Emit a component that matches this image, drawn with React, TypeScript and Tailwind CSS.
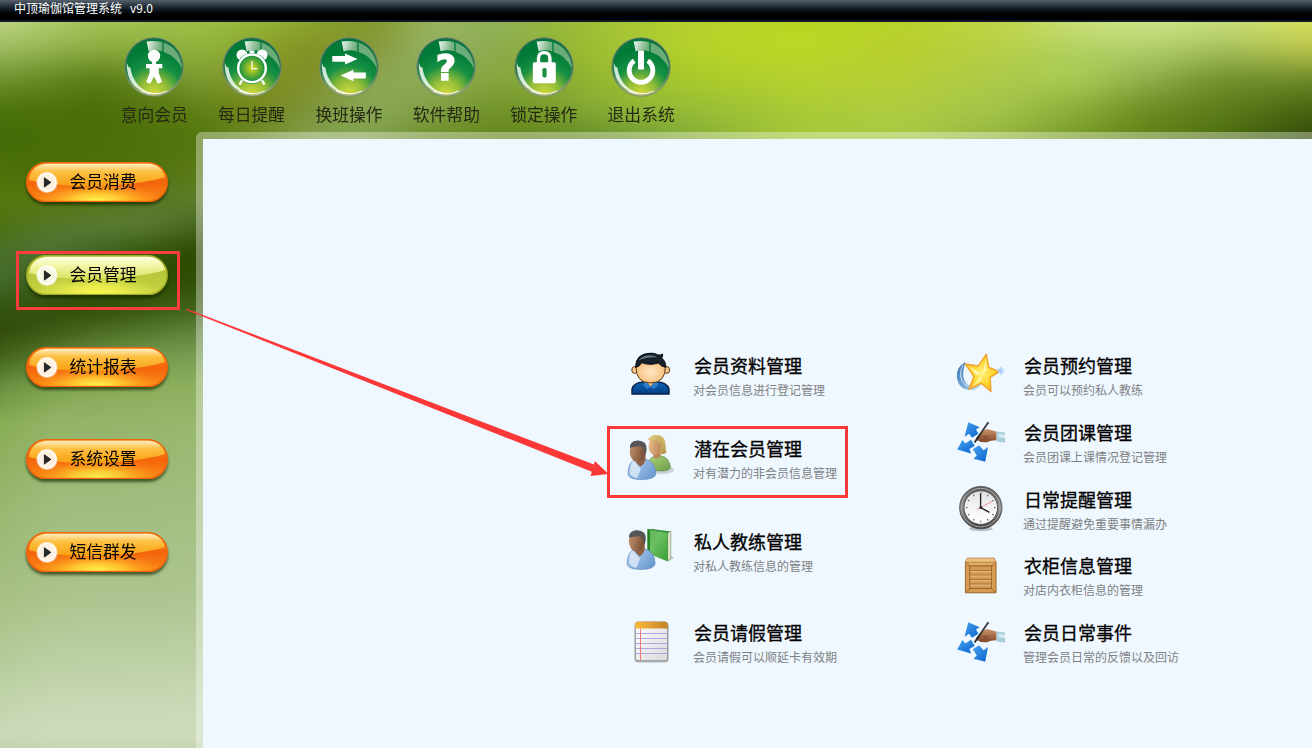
import type { ReactNode } from 'react'

type MeshRow = { y: number; colors: string[] }

// Header: one colour every 100px or so across the full width
const headerX = [0, 100, 200, 260, 310, 370, 430, 500, 560, 630, 700, 800, 900, 1000, 1080, 1150, 1220, 1312]
const headerRows: MeshRow[] = [
  { y: 22, colors: ['#bfd585', '#a3c458', '#9cc046', '#96b63a', '#8ba530', '#829629', '#98b35a', '#90b35a', '#98b83c', '#a9c636', '#b7d12f', '#bad621', '#b8d22c', '#bfd448', '#cce07c', '#cfe48a', '#cbe080', '#d6e05a'] },
  { y: 50, colors: ['#9cbb60', '#88aa3c', '#8fb33c', '#8aa02a', '#838f22', '#86983a', '#94b066', '#8baa4c', '#93b432', '#a8c732', '#b6d32a', '#bbd726', '#b9ce2e', '#b6cf48', '#b0d060', '#b0cd68', '#a2bd5a', '#b9c24a'] },
  { y: 80, colors: ['#6f9330', '#587a14', '#7c9c32', '#838f22', '#7f9028', '#8ca652', '#8dac54', '#86a63c', '#8bac34', '#9cbf2c', '#aaca2a', '#b5d130', '#b5cf36', '#adc94a', '#a8ca54', '#8fad4a', '#70902e', '#6c8928'] },
  { y: 110, colors: ['#4b720c', '#4c6d08', '#5f8015', '#75881d', '#7d943a', '#8aa958', '#83a046', '#6f9228', '#7ca030', '#8fb53a', '#98bd38', '#aacb36', '#afcc40', '#a3c34b', '#8caa38', '#6d8a20', '#5c7d1a', '#46630f'] },
  { y: 139, colors: ['#446c09', '#4b6e0a', '#50750c', '#698928', '#84a150', '#809e4a', '#6c8c28', '#64841a', '#5f851f', '#6c9530', '#86ae36', '#a5c637', '#a8c745', '#93b23e', '#729824', '#5e8116', '#4e6e12', '#304709'] },
]

const sideX = [0, 50, 100, 150, 203]
const sideRows: MeshRow[] = [
  { y: 139, colors: ['#446c09', '#486c09', '#4b6e0a', '#4f720b', '#55770f'] },
  { y: 170, colors: ['#4d7209', '#4b6e0a', '#4d7009', '#50720c', '#5c7b18'] },
  { y: 200, colors: ['#55780f', '#57780e', '#52740f', '#587826', '#5f7f2c'] },
  { y: 225, colors: ['#4d720f', '#54772a', '#5c7d37', '#5d7c38', '#44641c'] },
  { y: 250, colors: ['#4a7028', '#517438', '#426521', '#34560a', '#2c4900'] },
  { y: 280, colors: ['#466c2c', '#3b5e18', '#2d4b04', '#2d4a00', '#2f4e04'] },
  { y: 310, colors: ['#345412', '#2f4e08', '#30500a', '#3a5a14', '#45671c'] },
  { y: 330, colors: ['#31490b', '#3c5814', '#4a6b20', '#55772c', '#628440'] },
  { y: 355, colors: ['#3e5f14', '#587b30', '#6b8f42', '#74984c', '#7a9e54'] },
  { y: 385, colors: ['#668b3c', '#7da14e', '#86a956', '#8aad5a', '#8db05f'] },
  { y: 420, colors: ['#86aa52', '#93b465', '#94b468', '#96b56a', '#98b76d'] },
  { y: 500, colors: ['#96b66c', '#9fbc7c', '#a0bd7d', '#a0bd7e', '#a1be80'] },
  { y: 600, colors: ['#a6c083', '#acc48d', '#adc590', '#adc590', '#aec692'] },
  { y: 680, colors: ['#b9cea0', '#c2d3ab', '#c2d3ac', '#c3d4ad', '#c3d4ae'] },
  { y: 732, colors: ['#cbd9b8', '#cfddbd', '#cfddbd', '#cfddbd', '#cfddbd'] },
  { y: 748, colors: ['#c3d2ab', '#c6d4b0', '#c6d4b0', '#c6d4b0', '#c6d4b0'] },
]

// Every band fades from the colours of its upper row to those of the lower one
function Mesh({ id, xs, rows }: { id: string; xs: number[]; rows: MeshRow[] }) {
  const width = xs[xs.length - 1]
  return (
    <g id={id}>
      <defs>
        <linearGradient id={`${id}-fade`} x1="0" y1="0" x2="0" y2="1">
          <stop offset="0" stopColor="#fff" />
          <stop offset="1" stopColor="#fff" stopOpacity="0" />
        </linearGradient>
        {rows.map((row, i) => (
          <linearGradient key={i} id={`${id}-${i}`} gradientUnits="userSpaceOnUse" x1="0" y1="0" x2={width} y2="0">
            {row.colors.map((c, j) => (
              <stop key={j} offset={xs[j] / width} stopColor={c} />
            ))}
          </linearGradient>
        ))}
      </defs>
      {rows.slice(0, -1).map((row, i) => {
        const h = rows[i + 1].y - row.y
        return (
          <g key={i}>
            <mask id={`${id}-m${i}`} maskUnits="userSpaceOnUse" x="0" y={row.y} width={width} height={h} style={{ maskType: 'alpha' }}>
              <rect x="0" y={row.y} width={width} height={h} fill={`url(#${id}-fade)`} />
            </mask>
            <rect x="0" y={row.y} width={width} height={h} fill={`url(#${id}-${i + 1})`} />
            <rect x="0" y={row.y} width={width} height={h} fill={`url(#${id}-${i})`} mask={`url(#${id}-m${i})`} />
          </g>
        )
      })}
    </g>
  )
}

function Backdrop() {
  return (
    <svg className="absolute inset-0" width="1312" height="748" viewBox="0 0 1312 748">
      <filter id="soften" filterUnits="userSpaceOnUse" x="0" y="0" width="1312" height="748" colorInterpolationFilters="sRGB">
        <feGaussianBlur stdDeviation="14 8" />
      </filter>
      <Mesh id="head" xs={headerX} rows={headerRows} />
      <Mesh id="side" xs={sideX} rows={sideRows} />
      {/* a softened copy on top hides the band edges */}
      <g filter="url(#soften)">
        <use href="#head" />
        <use href="#side" />
      </g>
    </svg>
  )
}

/* Shared gradients for all icons */
function IconDefs() {
  return (
    <svg className="absolute" width="0" height="0">
      <defs>
        <radialGradient id="orb" cx="0.5" cy="1" r="0.8">
          <stop offset="0" stopColor="#d5dc3c" />
          <stop offset="0.35" stopColor="#8fbb38" />
          <stop offset="0.66" stopColor="#169044" />
          <stop offset="1" stopColor="#007a36" />
        </radialGradient>
        <linearGradient id="rim" x1="0" y1="0" x2="0" y2="1">
          <stop offset="0" stopColor="#1d6848" />
          <stop offset="0.6" stopColor="#3d7b4c" />
          <stop offset="1" stopColor="#b6b87e" />
        </linearGradient>
        <linearGradient id="shine" x1="0" y1="0" x2="1" y2="0.2">
          <stop offset="0" stopColor="#fff" stopOpacity="0.95" />
          <stop offset="1" stopColor="#c8d8b8" stopOpacity="0.55" />
        </linearGradient>
        <radialGradient id="dial">
          <stop offset="0" stopColor="#d8d820" />
          <stop offset="1" stopColor="#0b8b40" />
        </radialGradient>
        <radialGradient id="skin" cx="0.5" cy="0.55" r="0.6">
          <stop offset="0" stopColor="#ffe9c8" />
          <stop offset="1" stopColor="#f4b66c" />
        </radialGradient>
        <linearGradient id="navy" x1="0" y1="0" x2="0" y2="1">
          <stop offset="0" stopColor="#0b63b4" />
          <stop offset="1" stopColor="#053e86" />
        </linearGradient>
        <linearGradient id="brown" x1="0" y1="0" x2="1" y2="0.3">
          <stop offset="0" stopColor="#c4936e" />
          <stop offset="0.5" stopColor="#a17453" />
          <stop offset="1" stopColor="#7a5239" />
        </linearGradient>
        <linearGradient id="hand" x1="0" y1="0" x2="0" y2="1">
          <stop offset="0" stopColor="#c99068" />
          <stop offset="1" stopColor="#84492a" />
        </linearGradient>
        <linearGradient id="pale" x1="0" y1="0" x2="1" y2="0.2">
          <stop offset="0" stopColor="#ecc091" />
          <stop offset="1" stopColor="#c08a5e" />
        </linearGradient>
        <linearGradient id="shirt" x1="0" y1="0" x2="1" y2="0.6">
          <stop offset="0" stopColor="#b9d6f4" />
          <stop offset="1" stopColor="#6c9bd2" />
        </linearGradient>
        <linearGradient id="olive" x1="0" y1="0" x2="1" y2="1">
          <stop offset="0" stopColor="#b3d37c" />
          <stop offset="1" stopColor="#6a9e48" />
        </linearGradient>
        <linearGradient id="blond" x1="0" y1="0" x2="1" y2="1">
          <stop offset="0" stopColor="#e8d48a" />
          <stop offset="1" stopColor="#b39449" />
        </linearGradient>
        <linearGradient id="book" x1="0" y1="0" x2="1" y2="1">
          <stop offset="0" stopColor="#5fb456" />
          <stop offset="0.4" stopColor="#6cbf62" />
          <stop offset="1" stopColor="#37a034" />
        </linearGradient>
        <linearGradient id="amber" x1="0" y1="0" x2="1" y2="0">
          <stop offset="0" stopColor="#fcb93a" />
          <stop offset="1" stopColor="#c48429" />
        </linearGradient>
        <linearGradient id="paper" x1="0" y1="0" x2="1" y2="1">
          <stop offset="0" stopColor="#fff" />
          <stop offset="1" stopColor="#d9d9db" />
        </linearGradient>
        <radialGradient id="star" cx="0.5" cy="0.5" r="0.55">
          <stop offset="0" stopColor="#fff27a" />
          <stop offset="0.6" stopColor="#ffd42c" />
          <stop offset="1" stopColor="#fbae24" />
        </radialGradient>
        <linearGradient id="moon" x1="0" y1="0" x2="1" y2="1">
          <stop offset="0" stopColor="#3a6cab" />
          <stop offset="0.5" stopColor="#6ea4d6" />
          <stop offset="1" stopColor="#c9e2f7" />
        </linearGradient>
        <linearGradient id="arrowBlue" x1="0" y1="0" x2="1" y2="1">
          <stop offset="0" stopColor="#45a3f0" />
          <stop offset="1" stopColor="#0a62cd" />
        </linearGradient>
        <linearGradient id="steel" x1="0" y1="0" x2="0" y2="1">
          <stop offset="0" stopColor="#555" />
          <stop offset="0.5" stopColor="#8b8b8b" />
          <stop offset="1" stopColor="#3a3a3a" />
        </linearGradient>
        <linearGradient id="face" x1="0" y1="0" x2="0" y2="1">
          <stop offset="0" stopColor="#dcdfe2" />
          <stop offset="0.5" stopColor="#f4f5f6" />
          <stop offset="1" stopColor="#fff" />
        </linearGradient>
      </defs>
    </svg>
  )
}

function Orb({ children }: { children: ReactNode }) {
  return (
    <svg width="60" height="60" viewBox="0 0 60 60">
      <circle cx="30" cy="30" r="29.3" fill="url(#rim)" stroke="#6f8c78" strokeWidth="0.8" />
      <circle cx="30" cy="29.8" r="27.6" fill="url(#orb)" />
      <path d="M22.7 4.6Q30 3.4 38.3 5.2V14.6Q32 12.3 24.6 14.2Z" fill="url(#shine)" />
      <path d="M39.6 5.6Q56.5 12 58 31.5Q52 19 39.6 15Z" fill="#c4d6b4" fillOpacity="0.55" />
      <path d="M2.8 26Q2.6 45 15 52.3Q24 58.5 36 56.5Q22 57 14 48Q7.5 40 6.4 30.5L4.6 30Z" fill="#fff" fillOpacity="0.8" />
      <path d="M17 54Q30 59.5 43 54" fill="none" stroke="#fff" strokeWidth="1.2" strokeOpacity="0.8" />
      {children}
    </svg>
  )
}

const tools = [
  {
    label: '意向会员',
    icon: (
      <g fill="#fff">
        <circle cx="30" cy="19" r="6.2" />
        <path d="M22 27H38.3V31.3H34.8V36L38 45L33.8 46.8L30 39.6L26.2 46.8L22.2 45L25.6 36V31.3H22Z" />
        <rect x="28" y="24" width="4" height="5" />
      </g>
    ),
  },
  {
    label: '每日提醒',
    icon: (
      <g>
        <circle cx="20" cy="18" r="5.5" fill="#fff" />
        <circle cx="40" cy="18" r="5.5" fill="#fff" />
        <rect x="27.6" y="13.5" width="4.8" height="5" fill="#fff" />
        <path d="M20.5 42.5L17.5 47.5M39.5 42.5L42.5 47.5" stroke="#fff" strokeWidth="2.4" />
        <circle cx="30" cy="31.3" r="15.4" fill="#087e3b" />
        <circle cx="30" cy="31.3" r="13.8" fill="url(#dial)" stroke="#fff" strokeWidth="2.4" />
        <path d="M30 24V31.6H35.4" fill="none" stroke="#fff" strokeWidth="1.2" />
      </g>
    ),
  },
  {
    label: '换班操作',
    icon: (
      <path
        fill="#fff"
        d="M13.3 19H26V16.4L38.6 22L26 27.6V24.8H13.3ZM46.8 35.6H34.4V32.8L21.6 38.5L34.4 44.2V41.4H46.8Z"
      />
    ),
  },
  {
    label: '软件帮助',
    icon: (
      <text
        x="30"
        y="43.2"
        textAnchor="middle"
        fill="#fff"
        stroke="#fff"
        strokeWidth="1.4"
        className="font-['DejaVu_Sans'] text-[35px] font-bold"
      >
        ?
      </text>
    ),
  },
  {
    label: '锁定操作',
    icon: (
      <g>
        <path d="M24.5 26V21.5Q24.5 15.6 30.2 15.6T35.9 21.5V26" fill="none" stroke="#fff" strokeWidth="3.4" />
        <rect x="18.8" y="25.2" width="23" height="21" rx="1.6" fill="#fff" />
        <rect x="28.4" y="31" width="4.2" height="9.4" rx="1.6" fill="#1b8d40" />
      </g>
    ),
  },
  {
    label: '退出系统',
    icon: (
      <g>
        <path d="M23.2 23.8A11.8 11.8 0 1 0 36.8 23.8" fill="none" stroke="#fff" strokeWidth="4.8" />
        <rect x="27" y="13.6" width="6" height="18.8" rx="0.6" fill="#fff" />
      </g>
    ),
  },
]

const menus = [
  { label: '会员消费', box: 'mb-[34px] border-transparent' },
  { label: '会员管理', box: 'mb-[33px] border-[#fb3c3c]', active: true },
  { label: '统计报表', box: 'mb-[33px] border-transparent' },
  { label: '系统设置', box: 'mb-[34px] border-transparent' },
  { label: '短信群发', box: 'border-transparent' },
]

function PillButton({ label, active }: { label: string; active?: boolean }) {
  const id = active ? 'pill-lime' : 'pill-orange'
  return (
    <button className="relative flex h-10 w-[142px] items-center rounded-full text-left shadow-[0_3px_3px_rgba(20,35,0,0.65)]">
      <svg className="absolute inset-0" width="142" height="40" viewBox="0 0 142 40">
        <defs>
          <linearGradient id={id} x1="0" y1="0" x2="0" y2="1">
            <stop offset="0" stopColor={active ? '#b5c634' : '#f9a01b'} />
            <stop offset="0.5" stopColor={active ? '#b7c83a' : '#f4640c'} />
            <stop offset="1" stopColor={active ? '#c9d440' : '#fb8a16'} />
          </linearGradient>
          <linearGradient id={`${id}-top`} x1="0" y1="0" x2="0" y2="1">
            <stop offset="0" stopColor={active ? '#fdfee6' : '#ffeec4'} />
            <stop offset="0.35" stopColor={active ? '#f5f7ac' : '#fdc043'} />
            <stop offset="1" stopColor={active ? '#d8e05c' : '#f8a010'} />
          </linearGradient>
          <radialGradient id={`${id}-glow`} cx="0.5" cy="0.5" r="0.5">
            <stop offset="0" stopColor={active ? '#fdfb4e' : '#fff750'} />
            <stop offset="0.4" stopColor={active ? '#eff050' : '#ffd034'} stopOpacity="0.85" />
            <stop offset="1" stopColor={active ? '#e0e650' : '#fc9a1c'} stopOpacity="0" />
          </radialGradient>
          <clipPath id={`${id}-clip`}>
            <rect x="1.6" y="1.6" width="138.8" height="37.2" rx="18.6" />
          </clipPath>
        </defs>
        <rect x="0.8" y="0.8" width="140.4" height="38.8" rx="19.4" fill={`url(#${id})`} stroke={active ? '#a0ae26' : '#f0640a'} strokeWidth="1.6" />
        <path d="M20 1.8H122Q136 2.5 139 15Q112 23 71 24Q28 24.5 3 18Q5 3.5 20 1.8Z" fill={`url(#${id}-top)`} />
        <g clipPath={`url(#${id}-clip)`}>
          <ellipse cx="71" cy="38.8" rx="66" ry="19" fill={`url(#${id}-glow)`} />
        </g>
        <circle cx="21" cy="20.4" r="10.6" fill="#fff" fillOpacity="0.55" />
        <circle cx="21" cy="20.4" r="9" fill={active ? '#f7f8e2' : '#fdf0e0'} stroke="#fff" strokeWidth="1.2" />
        <path d="M18.4 15.8L24.8 20.4L18.4 25Z" fill="#262626" stroke="#262626" strokeLinejoin="round" />
      </svg>
      <span className="relative -mt-0.5 pl-[43.5px] text-[16.8px] leading-[38px] text-black">{label}</span>
    </button>
  )
}

const memberIcon = (
  <g>
    <path d="M5 44V39Q7 32.5 16 32H31Q40 32.5 42 39V44Z" fill="url(#navy)" stroke="#041f42" strokeWidth="1.4" />
    <path d="M18 31L23.6 36.5L29.5 31L31.5 35L27 39L23.6 37L20 39L16 35Z" fill="#2b7cc9" />
    <path d="M18 30H29L23.6 36.5Z" fill="#f4b66c" />
    <ellipse cx="7.6" cy="20" rx="2.8" ry="3.4" fill="#f9c98a" stroke="#5f3b12" />
    <ellipse cx="39.8" cy="20" rx="2.8" ry="3.4" fill="#f9c98a" stroke="#5f3b12" />
    <path d="M9 16Q8.4 32.6 23.7 33Q39 32.6 38.4 16Q31 9 23.7 9T9 16Z" fill="url(#skin)" stroke="#5f3b12" />
    <path d="M8.6 17.4Q8.5 3.2 24 3.2Q28 3 31 5Q33.5 5.6 35.6 4Q36 6.2 34.6 8Q38.8 11 38.8 17.4Q34 16.4 31.4 13Q22 15.8 14.8 12.6Q12.6 16.6 8.6 17.4Z" fill="#14202a" stroke="#05090d" />
    <path d="M12 10Q15.5 5.4 23 5.2Q28 5.2 30 7.4Q20 6.8 12 10Z" fill="#65737e" />
  </g>
)

// Man in a blue shirt, shared by the prospect and coach icons
const man = (
  <g>
    <path d="M1 42Q1 31 6 27.6Q12 29 18.4 26Q28 28.4 29 40.6Q28 46.5 15 46.6Q3 46.5 1 42Z" fill="url(#shirt)" stroke="#5d89bf" strokeWidth="0.7" />
    <path d="M4 31Q5 28.4 6.6 27.6L14 36L10 45Q4 43.6 3 40Z" fill="#e3eefa" fillOpacity="0.75" />
    <path d="M8 22H18.6V26.6Q17 32 13.4 33.4Q9.4 31 8 27Z" fill="#8f6246" />
    <ellipse cx="10.6" cy="18.4" rx="7.9" ry="10.6" fill="url(#brown)" />
    <path d="M2.9 15Q2.4 7.6 11 7.4Q19.8 7.8 19.6 15.4Q19.6 19.4 18.2 22.4Q17.2 21 17.4 18Q16.6 14.4 14 13.4Q8 13 2.9 15Z" fill="#565656" />
  </g>
)

const prospectIcon = (
  <g>
    <ellipse cx="36" cy="37" rx="11" ry="4" fill="#777" fillOpacity="0.3" />
    <path d="M20 36Q20 25 28 23H34Q42 24 43.5 34Q43 38 34 38T20 36Z" fill="url(#olive)" stroke="#5c8b44" strokeWidth="0.6" />
    <path d="M25.4 17H33.6V23Q31 26.4 27 25Z" fill="#b98557" />
    {/* hair behind the face, then the fringe */}
    <path d="M22 5.4Q25 2 30 2Q38 2.6 38.4 11Q38.4 16 39.6 19.4Q35.6 22.4 31.6 20.6Z" fill="url(#blond)" />
    <ellipse cx="27.6" cy="13.4" rx="6" ry="8.6" fill="url(#pale)" />
    <path d="M20.6 7Q23 2 30 2Q35 3 35 9L34 16Q32.6 9.6 29.6 7.6Q25 8.6 20.6 7Z" fill="url(#blond)" />
    {man}
  </g>
)

const coachIcon = (
  <g>
    <path d="M41 36L47 31.4L43.6 30Z" fill="#777" fillOpacity="0.4" />
    <path d="M21 3.4L25 3L43.8 5.4L41 7Z" fill="#2f8f2f" />
    <path d="M40.4 7L43.8 5.4V32.6L40.4 34.8Z" fill="#e4e0cb" stroke="#6b9463" strokeWidth="0.6" />
    <path d="M20.8 3.4L40.6 6.8V35L20.8 27Z" fill="url(#book)" stroke="#3a9638" strokeWidth="0.7" />
    <path d="M20.6 3.2L22.8 3.6V27.8L20.6 26.8Z" fill="#1f8021" />
    <g transform="translate(-0.8 -3.2)">{man}</g>
  </g>
)

const notepadIcon = (
  <g>
    <rect x="7.5" y="6" width="34" height="39.5" rx="3" fill="#000" fillOpacity="0.25" />
    <rect x="8.3" y="5" width="32.4" height="38.8" rx="2.6" fill="url(#paper)" stroke="#8f8f8f" />
    <path d="M8.3 11.4V7.4Q8.3 4.8 11 4.8H38Q40.7 4.8 40.7 7.4V11.4Z" fill="url(#amber)" />
    <path d="M9 16.5H40M9 21.5H40M9 26.5H40M9 31.5H40M9 36.5H40" stroke="#a3a1e2" strokeWidth="0.9" />
    <path d="M13.5 11.5V43.4" stroke="#f2777d" />
  </g>
)

const starIcon = (
  <g>
    <path d="M8.6 12Q-1 17-0.2 27Q1.5 39.5 13 40Q21 40 24.5 34Q17 38 10.5 34.4Q3 28 8.6 12Z" fill="url(#moon)" />
    <path d="M6 15Q1.8 23 5 31Q9 37 16 37" fill="none" stroke="#eaf5ff" strokeWidth="0.8" />
    <path
      d="M29.3 4.2L31.8 17.3L42.3 21.6L33.2 27.4L34 41.6L24.4 33.4L12 39.2L16.8 26.4L8.2 14L21 16Z"
      fill="url(#star)"
      stroke="#f4a02c"
      strokeWidth="1.3"
      strokeLinejoin="round"
    />
    <path d="M25.5 24.5L29 7L29.8 20ZM25.5 24.5L11 15.6L19 25ZM25.5 24.5L14 37.4L24 31Z" fill="#fff9b8" fillOpacity="0.8" />
    <path d="M43.6 17V25M39.8 21H47.6M41 18.3L46.4 23.7M46.4 18.3L41 23.7" stroke="#a9cdf5" strokeWidth="1.1" />
  </g>
)

const groupIcon = (
  <g>
    <path d="M11.3 5.2L22.6 10.2L19 12.6L21.4 16.8L15 20.8L12 16.8L7.6 19.8Z" fill="url(#arrowBlue)" />
    <path d="M0.2 32.6L5.4 23L8.4 26.4L14 22.8L17.8 28.8L12.4 32L14.2 36.4Z" fill="url(#arrowBlue)" />
    <path d="M28.2 44.8L16.4 41.8L19.8 38.4L15.8 32.2L22 28.2L26.6 33.2L31 30Z" fill="url(#arrowBlue)" />
    <path d="M18.6 22.6Q20 18 24 16Q27 11.8 31 12.2Q35 13.4 39.5 14.6V23.2Q34 23 30 25.2Q24 26 18.6 22.6Z" fill="url(#hand)" />
    <path d="M21 22Q25 18 31 19.6M23 24Q27 20.6 32 22" fill="none" stroke="#6a3a22" strokeWidth="0.7" />
    <path d="M38.8 14.6L48 15.4V25.8L39.4 24.6Q41.4 20 38.8 14.6Z" fill="#a9cfdb" />
    <path d="M41 17L48 17.6V21L42 20.4Z" fill="#d5eaf0" />
    <path d="M31.4 5.2L17.6 25.6" stroke="#23252a" strokeWidth="1.8" />
    <path d="M31 6.4L24 16.6" stroke="#77818a" strokeWidth="0.6" />
  </g>
)

const ticks = Array.from({ length: 12 }, (_, i) => i * 30)

const clockIcon = (
  <g>
    <ellipse cx="23.8" cy="44.8" rx="12" ry="2.4" fill="#000" fillOpacity="0.22" />
    <circle cx="23.8" cy="23.6" r="21.2" fill="url(#steel)" stroke="#4a4a4a" strokeWidth="0.8" />
    <circle cx="23.8" cy="23.6" r="19.3" fill="none" stroke="#b5b5b5" strokeWidth="0.9" />
    <circle cx="23.8" cy="23.6" r="16.8" fill="url(#face)" stroke="#555" />
    {ticks.map((deg) => (
      <path key={deg} d="M23.8 8.8V10.4" stroke="#444" strokeWidth="0.9" transform={`rotate(${deg} 23.8 23.6)`} />
    ))}
    <path d="M20 25.6L36.6 16.6" stroke="#f08a8a" strokeWidth="0.9" />
    <path d="M23.6 9.6V23.6L32.4 28.4" fill="none" stroke="#1c1c1c" strokeWidth="1.3" />
    <circle cx="23.8" cy="23.6" r="1.4" fill="#222" />
  </g>
)

const crateIcon = (
  <g>
    <path d="M10.6 8.2H37L39 12V42.8H8.4V12Z" fill="#d79b53" stroke="#9c6527" />
    <path d="M10.6 8.2H37L39 12H8.4Z" fill="#e9bd7d" />
    <rect x="8.8" y="12.2" width="29.8" height="3.6" fill="#e3ad66" stroke="#ab7232" strokeWidth="0.6" />
    <rect x="12.8" y="16" width="21.8" height="22.6" fill="#d59b55" stroke="#8b5820" strokeWidth="0.8" />
    <path d="M13 20.5H34.4M13 25H34.4M13 29.5H34.4M13 34H34.4" stroke="#a46e34" strokeWidth="0.9" />
    <path d="M13 21.6H34.4M13 26.1H34.4M13 30.6H34.4M13 35.1H34.4" stroke="#ecc287" strokeWidth="0.8" />
    <path d="M9 42.4L12.8 38.6M38.4 42.4L34.6 38.6M9 12.4L12.8 16M38.4 12.4L34.6 16" stroke="#8b5820" strokeWidth="0.8" />
  </g>
)

type Entry = { title: string; desc: string; icon: ReactNode }

const leftEntries: (Entry & { box: string })[] = [
  { title: '会员资料管理', desc: '对会员信息进行登记管理', icon: memberIcon, box: 'h-[71px] border-transparent pt-[3px]' },
  { title: '潜在会员管理', desc: '对有潜力的非会员信息管理', icon: prospectIcon, box: 'mt-[11px] h-[72px] border-[#fb3838] pt-1' },
  { title: '私人教练管理', desc: '对私人教练信息的管理', icon: coachIcon, box: 'mt-[22px] h-[71px] border-transparent pt-[3px]' },
  { title: '会员请假管理', desc: '会员请假可以顺延卡有效期', icon: notepadIcon, box: 'mt-5 h-[71px] border-transparent pt-[3px]' },
]

const rightEntries: Entry[] = [
  { title: '会员预约管理', desc: '会员可以预约私人教练', icon: starIcon },
  { title: '会员团课管理', desc: '会员团课上课情况登记管理', icon: groupIcon },
  { title: '日常提醒管理', desc: '通过提醒避免重要事情漏办', icon: clockIcon },
  { title: '衣柜信息管理', desc: '对店内衣柜信息的管理', icon: crateIcon },
  { title: '会员日常事件', desc: '管理会员日常的反馈以及回访', icon: groupIcon },
]

function EntryBody({ title, desc, icon }: Entry) {
  return (
    <>
      <svg className="shrink-0 overflow-visible" width="48" height="48" viewBox="0 0 48 48">
        {icon}
      </svg>
      <div className="ml-[18px] whitespace-nowrap pt-[3px]">
        <h3 className="pl-px text-lg leading-6 text-black [-webkit-text-stroke:0.3px_#000]">{title}</h3>
        <p className="pt-px text-xs leading-6 text-[#808284]">{desc}</p>
      </div>
    </>
  )
}

export default function App() {
  return (
    <div className="relative flex h-[748px] w-[1312px] flex-col overflow-hidden font-['Noto_Sans_CJK_SC',sans-serif]">
      <Backdrop />
      <IconDefs />

      {/* Title bar */}
      <header className="relative h-[22px] shrink-0 border-b-2 border-[#121a2a] bg-linear-to-b from-[#56616c] via-[#17222c] via-40% to-black to-90% pl-[14px] text-xs leading-4 text-white">
        中顶瑜伽馆管理系统<span className="ml-2">v9.0</span>
      </header>

      {/* Toolbar */}
      <nav className="relative flex h-[110px] shrink-0 pl-[105.5px] pt-[15px]">
        {tools.map((t) => (
          <button key={t.label} className="flex w-[97.4px] flex-col items-center">
            <Orb>{t.icon}</Orb>
            <span className="mt-[5px] text-[16.8px] leading-6 text-[#262a12]">{t.label}</span>
          </button>
        ))}
      </nav>

      <div className="relative flex flex-1">
        {/* Sidebar */}
        <aside className="flex w-[196px] shrink-0 flex-col pl-4 pt-[26px]">
          {menus.map(({ label, box, active }) => (
            <div key={label} className={`h-[59px] w-[164px] shrink-0 border-[3px] pl-[7px] pt-px ${box}`}>
              <PillButton label={label} active={active} />
            </div>
          ))}
        </aside>

        {/* Content panel */}
        <div className="flex flex-1 rounded-tl-md bg-white/35 pl-[7px] pt-[7px]">
          <main className="flex flex-1 bg-[#eff7ff] pl-[404px] pt-[205px]">
            <section className="flex w-[241px] flex-col">
              {leftEntries.map(({ box, ...e }) => (
                <div key={e.title} className={`flex border-[3px] pl-[17px] ${box}`}>
                  <EntryBody {...e} />
                </div>
              ))}
            </section>
            <section className="ml-[109px] flex flex-col pt-1.5">
              {rightEntries.map((e) => (
                <div key={e.title} className="flex h-[66.75px]">
                  <EntryBody {...e} />
                </div>
              ))}
            </section>
          </main>
        </div>
      </div>

      {/* Pointer from the active menu to its entry */}
      <svg className="pointer-events-none absolute inset-0" width="1312" height="748" viewBox="0 0 1312 748">
        <path d="M186.5 308.8L594 464.5L594.8 461L608.5 474L590.5 476L591.8 471.8L186.3 310Z" fill="#fb3838" />
      </svg>
    </div>
  )
}
